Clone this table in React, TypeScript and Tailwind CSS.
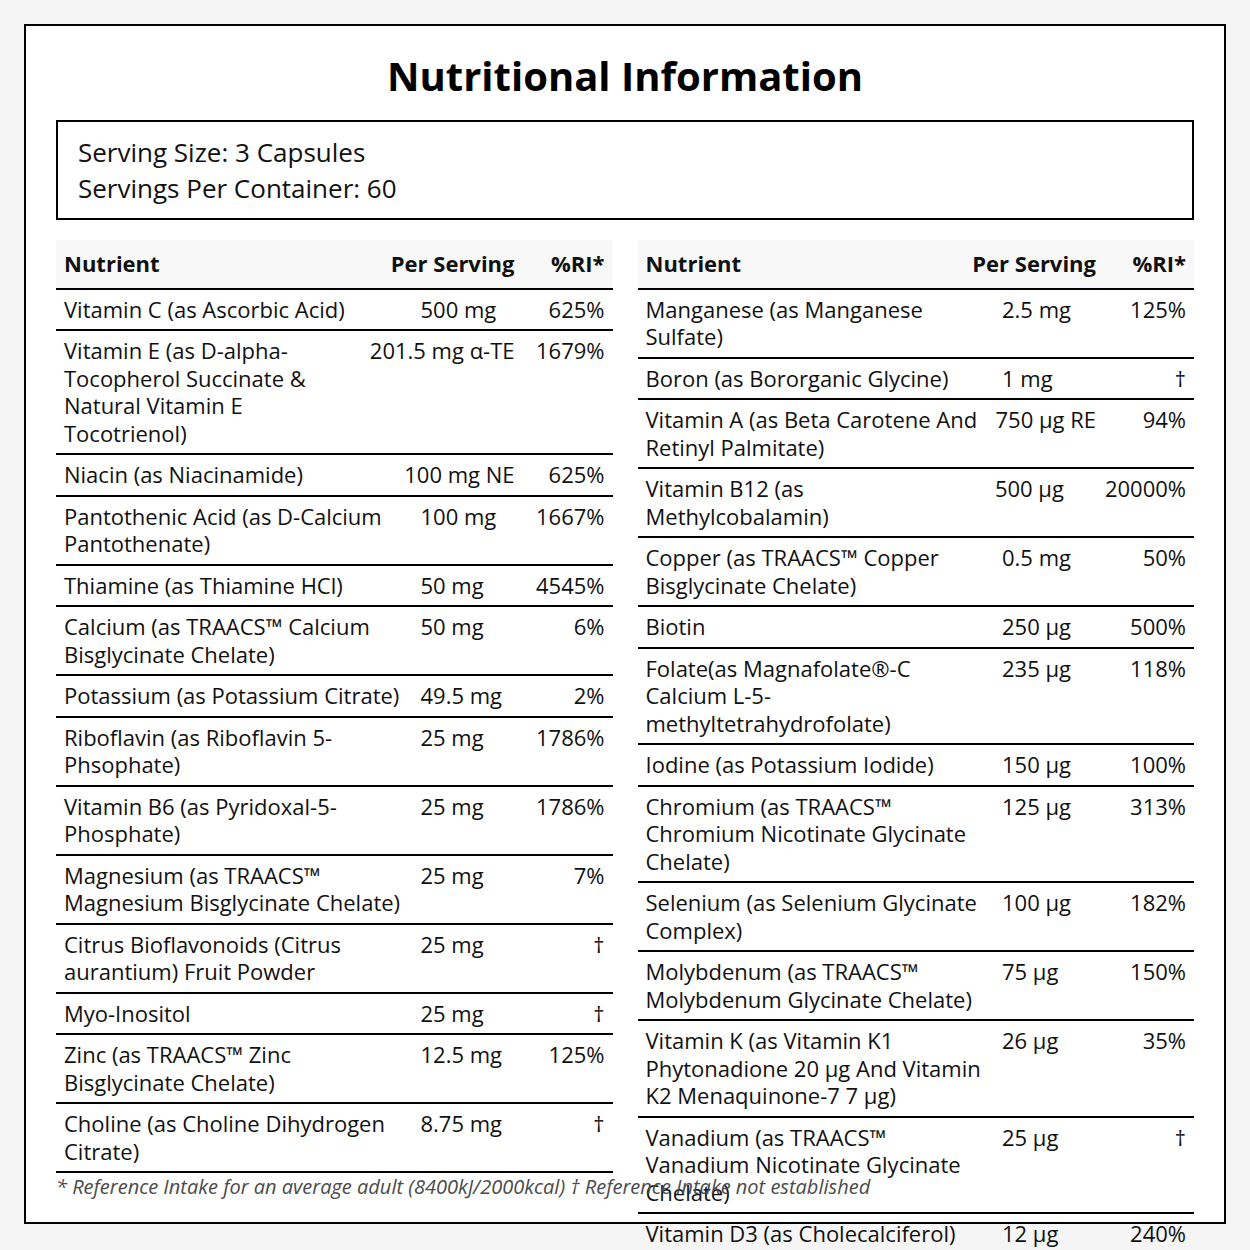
import React from "react";

type Row = { name: string; amount: string; ri: string };

const leftRows: Row[] = [
  { name: "Vitamin C (as Ascorbic Acid)", amount: "500 mg", ri: "625%" },
  {
    name: "Vitamin E (as D-alpha-Tocopherol Succinate & Natural Vitamin E Tocotrienol)",
    amount: "201.5 mg α-TE",
    ri: "1679%",
  },
  { name: "Niacin (as Niacinamide)", amount: "100 mg NE", ri: "625%" },
  { name: "Pantothenic Acid (as D-Calcium Pantothenate)", amount: "100 mg", ri: "1667%" },
  { name: "Thiamine (as Thiamine HCl)", amount: "50 mg", ri: "4545%" },
  { name: "Calcium (as TRAACS™ Calcium Bisglycinate Chelate)", amount: "50 mg", ri: "6%" },
  { name: "Potassium (as Potassium Citrate)", amount: "49.5 mg", ri: "2%" },
  { name: "Riboflavin (as Riboflavin 5-Phsophate)", amount: "25 mg", ri: "1786%" },
  { name: "Vitamin B6 (as Pyridoxal-5-Phosphate)", amount: "25 mg", ri: "1786%" },
  { name: "Magnesium (as TRAACS™ Magnesium Bisglycinate Chelate)", amount: "25 mg", ri: "7%" },
  { name: "Citrus Bioflavonoids (Citrus aurantium) Fruit Powder", amount: "25 mg", ri: "†" },
  { name: "Myo-Inositol", amount: "25 mg", ri: "†" },
  { name: "Zinc (as TRAACS™ Zinc Bisglycinate Chelate)", amount: "12.5 mg", ri: "125%" },
  { name: "Choline (as Choline Dihydrogen Citrate)", amount: "8.75 mg", ri: "†" },
];

const rightRows: Row[] = [
  { name: "Manganese (as Manganese Sulfate)", amount: "2.5 mg", ri: "125%" },
  { name: "Boron (as Bororganic Glycine)", amount: "1 mg", ri: "†" },
  { name: "Vitamin A (as Beta Carotene And Retinyl Palmitate)", amount: "750 μg RE", ri: "94%" },
  { name: "Vitamin B12 (as Methylcobalamin)", amount: "500 μg", ri: "20000%" },
  { name: "Copper (as TRAACS™ Copper Bisglycinate Chelate)", amount: "0.5 mg", ri: "50%" },
  { name: "Biotin", amount: "250 μg", ri: "500%" },
  {
    name: "Folate(as Magnafolate®-C Calcium L-5-methyltetrahydrofolate)",
    amount: "235 μg",
    ri: "118%",
  },
  { name: "Iodine (as Potassium Iodide)", amount: "150 μg", ri: "100%" },
  {
    name: "Chromium (as TRAACS™ Chromium Nicotinate Glycinate Chelate)",
    amount: "125 μg",
    ri: "313%",
  },
  { name: "Selenium (as Selenium Glycinate Complex)", amount: "100 μg", ri: "182%" },
  {
    name: "Molybdenum (as TRAACS™ Molybdenum Glycinate Chelate)",
    amount: "75 μg",
    ri: "150%",
  },
  {
    name: "Vitamin K (as Vitamin K1 Phytonadione 20 μg And Vitamin K2 Menaquinone-7 7 μg)",
    amount: "26 μg",
    ri: "35%",
  },
  {
    name: "Vanadium (as TRAACS™ Vanadium Nicotinate Glycinate Chelate)",
    amount: "25 μg",
    ri: "†",
  },
  { name: "Vitamin D3 (as Cholecalciferol)", amount: "12 μg", ri: "240%" },
];

const NutrientTable = ({ rows }: { rows: Row[] }) => {
  return (
    <div className="flex flex-col text-[22px] leading-[27.5px]">
      <div className="flex items-start bg-[#f8f8f8] py-[10px] border-b-2 border-black font-bold">
        <div className="flex-1 min-w-0 pl-2 pr-4">Nutrient</div>
        <div className="shrink-0 min-w-[94px] whitespace-nowrap">Per Serving</div>
        <div className="shrink-0 min-w-[98px] pl-4 pr-2 text-right whitespace-nowrap">%RI*</div>
      </div>
      {rows.map((row) => (
        <div key={row.name} className="flex items-start py-1.5 border-b-2 border-black">
          <div className="flex-1 min-w-0 pl-2 pr-4">{row.name}</div>
          <div className="shrink-0 min-w-[94px] whitespace-nowrap">{row.amount}</div>
          <div className="shrink-0 min-w-[98px] pl-4 pr-2 text-right whitespace-nowrap">
            {row.ri}
          </div>
        </div>
      ))}
    </div>
  );
};

export default function App() {
  return (
    <div className="h-[1250px] overflow-hidden bg-[#f5f5f5] p-6 font-['Open_Sans',sans-serif] text-[#111]">
      <div className="flex h-[1200px] flex-col border-2 border-black bg-white px-[30px] pt-[30px] pb-[21px]">
        <h1 className="mb-6 text-center text-[40px] font-bold leading-[40px] text-black">
          Nutritional Information
        </h1>

        <div className="border-2 border-black px-5 py-3 text-[26px] leading-[36px]">
          <div>Serving Size: 3 Capsules</div>
          <div>Servings Per Container: 60</div>
        </div>

        <div className="mt-5 grid min-h-0 flex-1 grid-cols-2 items-start gap-x-[25px]">
          <NutrientTable rows={leftRows} />
          <NutrientTable rows={rightRows} />
        </div>

        <p className="whitespace-nowrap text-[20px] italic leading-[28px] text-[#4a4a4a]">
          * Reference Intake for an average adult (8400kJ/2000kcal) † Reference Intake not
          established
        </p>
      </div>
    </div>
  );
}
